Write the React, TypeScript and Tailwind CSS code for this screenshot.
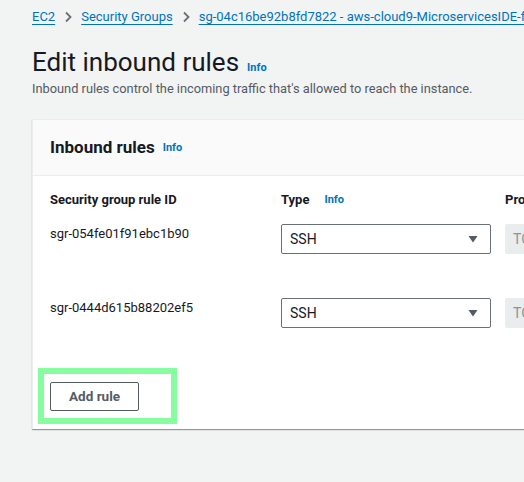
import React from "react";

const rules = [
  { id: "sgr-054fe01f91ebc1b90", type: "SSH", proto: "TCP" },
  { id: "sgr-0444d615b88202ef5", type: "SSH", proto: "TCP" },
];

function Chevron() {
  return (
    <svg width="10" height="12" viewBox="0 0 10 12" className="mx-[8px] shrink-0">
      <path d="M3 1.5 L7.5 6 L3 10.5" fill="none" stroke="#687078" strokeWidth="1.8" />
    </svg>
  );
}

function TypeSelect({ value }: { value: string }) {
  return (
    <div className="w-[210px] h-[30px] border border-[#687078] rounded-[2px] bg-white flex items-center justify-between pl-[8px] pr-[12px]">
      <span className="text-[14px] text-[#16191f]">{value}</span>
      <svg width="10" height="7" viewBox="0 0 10 7">
        <path d="M0.5 0 H9.5 L5 6.5 Z" fill="#545b64" />
      </svg>
    </div>
  );
}

export default function App() {
  return (
    <div
      className="w-[524px] h-[482px] overflow-hidden bg-[#f2f3f3] text-[#16191f]"
      style={{ fontFamily: 'Roboto, "Noto Sans", sans-serif' }}
    >
      <div className="pl-[32px] pt-[7px]">
        {/* Breadcrumbs */}
        <nav className="flex items-center h-[20px] text-[13px] whitespace-nowrap overflow-hidden">
          <a className="text-[#0073bb] underline underline-offset-[3px]">EC2</a>
          <Chevron />
          <a className="text-[#0073bb] underline underline-offset-[3px]">Security Groups</a>
          <Chevron />
          <a className="text-[#0073bb] underline underline-offset-[3px]">
            sg-04c16be92b8fd7822 - aws-cloud9-MicroservicesIDE-f4a1b2c3
          </a>
        </nav>

        {/* Page header */}
        <div className="mt-[19px] flex items-baseline gap-[8px]">
          <h1 className="text-[26px] leading-[32px] font-normal">Edit inbound rules</h1>
          <span className="text-[11px] font-bold text-[#0073bb]">Info</span>
        </div>
        <p className="mt-[1px] text-[12.8px] leading-[20px] text-[#545b64] whitespace-nowrap">
          Inbound rules control the incoming traffic that's allowed to reach the instance.
        </p>

        {/* Card */}
        <div className="mt-[20px] w-[520px] bg-white border-l border-t border-[#eaeded] shadow-[0_1px_1px_0_rgba(0,28,36,0.3),1px_1px_1px_0_rgba(0,28,36,0.15)]">
          <div className="h-[56px] bg-[#fafafa] border-b border-[#eaeded] flex items-center pl-[17px] gap-[8px]">
            <h2 className="text-[17px] font-bold">Inbound rules</h2>
            <span className="text-[11px] font-bold text-[#0073bb] mt-[2px]">Info</span>
          </div>

          <div className="pl-[17px] pt-[14px] pb-[5px]">
            <div className="grid grid-cols-[231px_224px_60px] items-center h-[20px] text-[13px] font-bold whitespace-nowrap overflow-hidden">
              <span>Security group rule ID</span>
              <span className="flex items-center gap-[15px]">
                Type <span className="text-[11px] text-[#0073bb]">Info</span>
              </span>
              <span>Protocol</span>
            </div>

            <div className="flex flex-col gap-[44px] mt-[14px]">
              {rules.map((r) => (
                <div key={r.id} className="grid grid-cols-[231px_224px_60px] items-start overflow-hidden">
                  <span className="text-[13px] leading-[20px] whitespace-nowrap">{r.id}</span>
                  <TypeSelect value={r.type} />
                  <div className="h-[30px] w-[80px] bg-[#eaeded] rounded-[2px] flex items-center pl-[8px] text-[14px] text-[#879596]">
                    {r.proto}
                  </div>
                </div>
              ))}
            </div>

            <div className="mt-[40px] -ml-[12px] w-[139px] h-[56px] border-[6px] border-[#86fea0] flex items-center pl-[6px]">
              <button className="w-[89px] h-[29px] border border-[#545b64] rounded-[2px] bg-white text-[13.5px] font-bold text-[#545b64]">
                Add rule
              </button>
            </div>
          </div>
        </div>
      </div>
    </div>
  );
}
